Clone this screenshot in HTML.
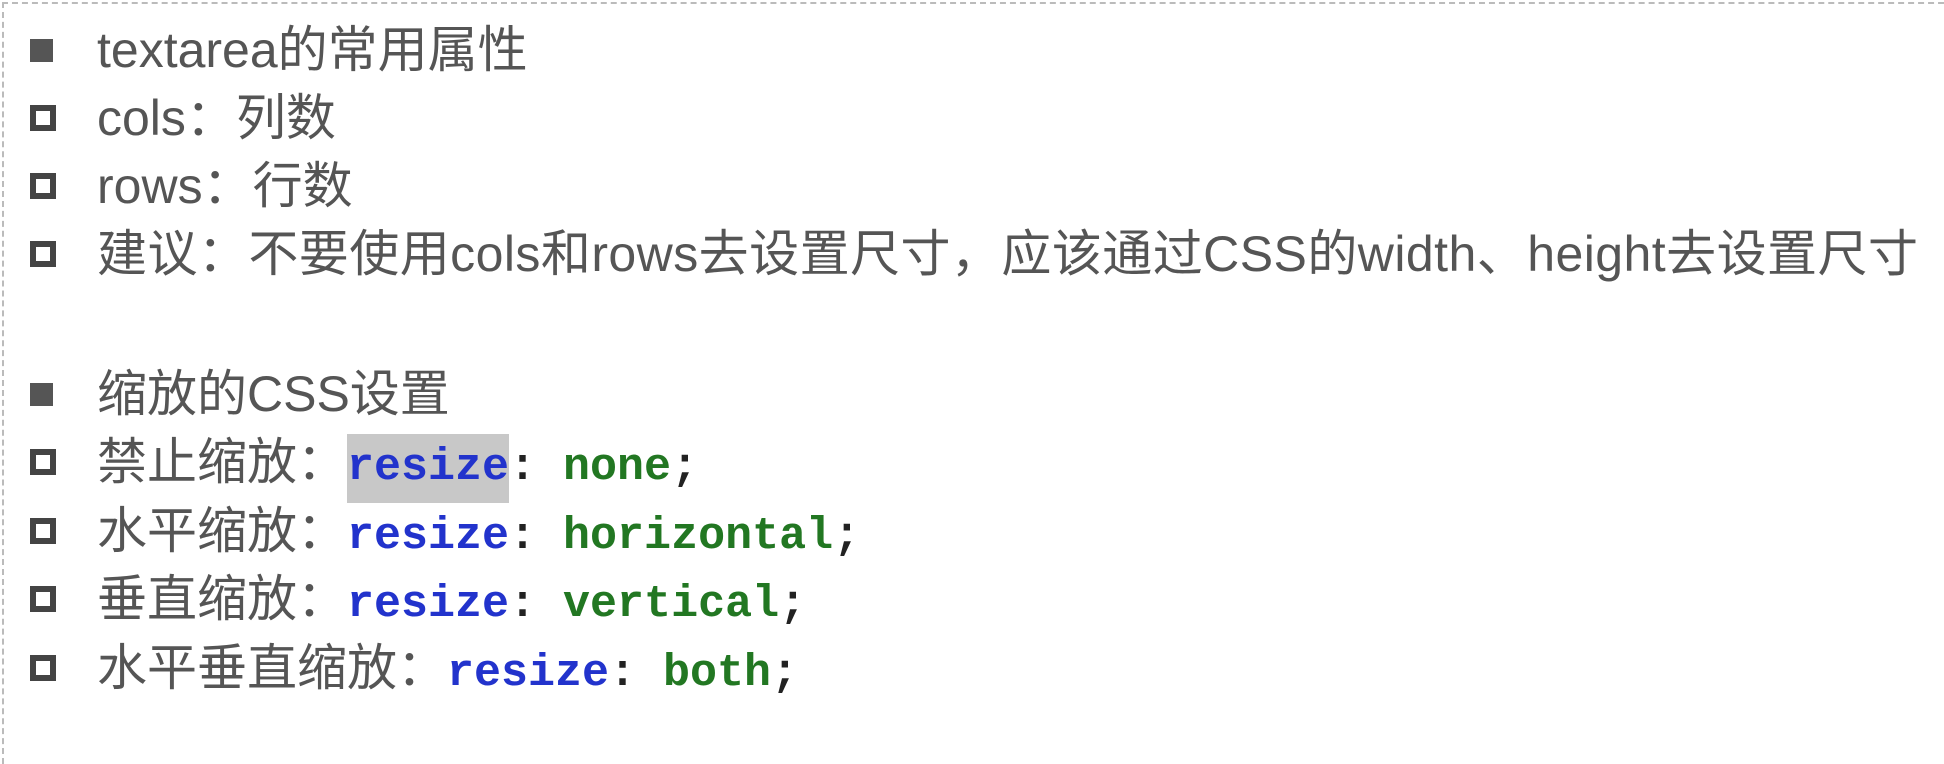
<!DOCTYPE html>
<html><head><meta charset="utf-8"><style>
html,body{margin:0;padding:0;background:#fff;}
body{width:1944px;height:732px;position:relative;overflow:hidden;font-family:"Liberation Sans","Noto Sans CJK SC",sans-serif;color:#555;}
.frame{position:absolute;left:2px;top:2px;width:1960px;height:760px;border-top:2px dashed #bbb;border-left:2px dashed #bbb;}
.l{position:absolute;left:97px;font-size:50px;line-height:60px;white-space:nowrap;}
.b{position:absolute;left:30px;width:26px;height:26px;box-sizing:border-box;border:6px solid #444;}
.b.f{background:#555;border-color:#555;width:23px;height:23px;}
.c{display:inline-block;width:50px;text-align:center;}
.m{font-family:"Liberation Mono",monospace;font-weight:bold;font-size:45px;}
.k{color:#2233cc;}.v{color:#227722;}.p{color:#222;}
.hl{background:#c8c8c8;padding:8px 0 10px;}
</style></head><body>
<div class="frame"></div>
<div class="b f" style="top:39px"></div><div class="l" style="top:20px">textarea的常用属性</div>
<div class="b" style="top:105px"></div><div class="l" style="top:88px">cols<span class="c">：</span>列数</div>
<div class="b" style="top:173px"></div><div class="l" style="top:156px">rows<span class="c">：</span>行数</div>
<div class="b" style="top:241px"></div><div class="l" style="top:224px;letter-spacing:0.45px">建议：不要使用cols和rows去设置尺寸，应该通过CSS的width、height去设置尺寸</div>
<div class="b f" style="top:383px"></div><div class="l" style="top:364px">缩放的CSS设置</div>
<div class="b" style="top:449px"></div><div class="l" style="top:432px">禁止缩放：<span class="m"><span class="k hl">resize</span><span class="p">: </span><span class="v">none</span><span class="p">;</span></span></div>
<div class="b" style="top:518px"></div><div class="l" style="top:501px">水平缩放：<span class="m"><span class="k">resize</span><span class="p">: </span><span class="v">horizontal</span><span class="p">;</span></span></div>
<div class="b" style="top:586px"></div><div class="l" style="top:569px">垂直缩放：<span class="m"><span class="k">resize</span><span class="p">: </span><span class="v">vertical</span><span class="p">;</span></span></div>
<div class="b" style="top:655px"></div><div class="l" style="top:638px">水平垂直缩放：<span class="m"><span class="k">resize</span><span class="p">: </span><span class="v">both</span><span class="p">;</span></span></div>
</body></html>
